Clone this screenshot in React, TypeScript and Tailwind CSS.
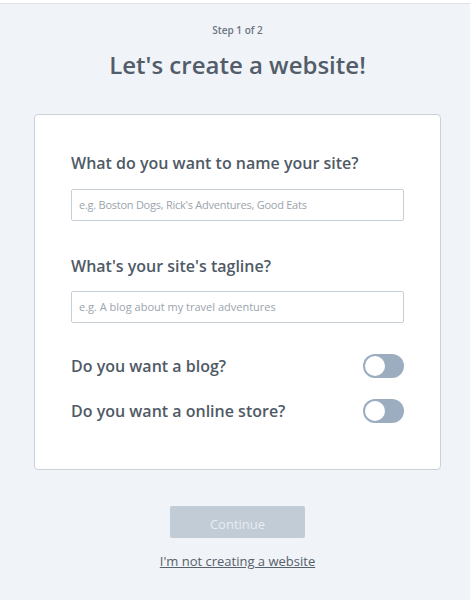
import React from "react";

function Toggle() {
  return (
    <div className="w-[41px] h-[24px] rounded-full bg-[#9badbf] flex items-center px-[2px] shrink-0">
      <div className="w-[20px] h-[20px] rounded-full bg-white" />
    </div>
  );
}

export default function App() {
  return (
    <div
      className="w-[470px] min-h-[600px] bg-white"
      style={{ fontFamily: '"Open Sans", "Noto Sans", sans-serif' }}
    >
      <div className="h-[3px] bg-white" />
      <div className="min-h-[597px] bg-[#f0f3f7] border-t border-[#dfe3e8]">
        <div className="w-[407px] ml-[34px] flex flex-col items-center">
          <div className="mt-[19px] text-[10px] leading-[14px] font-semibold text-[#6c7683]">
            Step 1 of 2
          </div>
          <h1 className="mt-[12px] text-[24px] leading-[32px] font-semibold text-[#525d69]">
            Let's create a website!
          </h1>
          <div className="mt-[33px] w-full bg-white border border-[#c9d1d9] rounded-[4px] px-[36px] pt-[36px] pb-[46px]">
            <div className="text-[16px] leading-[24px] font-semibold text-[#4f5a66]">
              What do you want to name your site?
            </div>
            <div className="mt-[14px] h-[32px] border border-[#c6ced6] rounded-[2px] flex items-center px-[7px] text-[11px] tracking-[-0.25px] text-[#9ba4ad]">
              e.g. Boston Dogs, Rick's Adventures, Good Eats
            </div>
            <div className="mt-[33px] text-[16px] leading-[24px] font-semibold text-[#4f5a66]">
              What's your site's tagline?
            </div>
            <div className="mt-[13px] h-[32px] border border-[#c6ced6] rounded-[2px] flex items-center px-[7px] text-[11px] text-[#9ba4ad]">
              e.g. A blog about my travel adventures
            </div>
            <div className="mt-[31px] flex items-center justify-between h-[24px]">
              <span className="text-[16px] leading-[24px] font-semibold text-[#4f5a66]">
                Do you want a blog?
              </span>
              <Toggle />
            </div>
            <div className="mt-[21px] flex items-center justify-between h-[24px]">
              <span className="text-[16px] leading-[24px] font-semibold text-[#4f5a66]">
                Do you want a online store?
              </span>
              <Toggle />
            </div>
          </div>
          <button className="mt-[36px] w-[135px] h-[32px] rounded-[2px] bg-[#c1ccd6] text-[13px] leading-[32px] text-[#e8edf2] pt-[2px]">
            Continue
          </button>
          <a className="mt-[14px] text-[13px] leading-[18px] text-[#56616c] underline">
            I'm not creating a website
          </a>
        </div>
      </div>
    </div>
  );
}
